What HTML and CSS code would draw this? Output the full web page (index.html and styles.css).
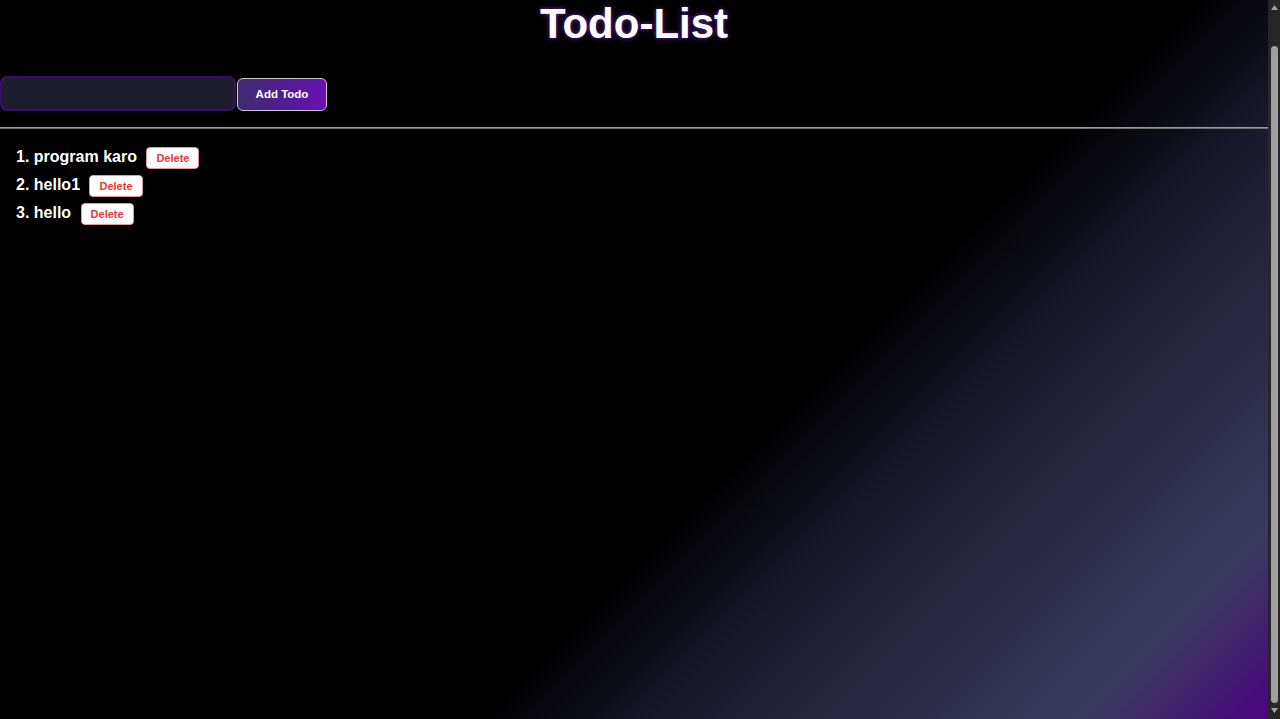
FILE: index.html
```html
<!DOCTYPE html>
<html lang="en">
<head>
<meta charset="utf-8">
<title>Todo-List</title>
<link rel="stylesheet" href="styles.css">
</head>
<body>
  <main class="page">
    <h1 class="title">Todo-List</h1>
    <div class="add-row">
      <input class="todo-input" type="text" aria-label="New todo">
      <button class="add-btn" type="button">Add Todo</button>
    </div>
    <hr class="divider">
    <ul class="todo-list">
      <li class="todo-item"><span class="todo-text">1. program karo</span> <button class="del-btn" type="button">Delete</button></li>
      <li class="todo-item"><span class="todo-text">2. hello1</span> <button class="del-btn" type="button">Delete</button></li>
      <li class="todo-item"><span class="todo-text">3. hello</span> <button class="del-btn" type="button">Delete</button></li>
    </ul>
  </main>
  <div class="scrollbar" aria-hidden="true">
    <div class="sb-arrow sb-up">
      <svg width="7" height="5" viewBox="0 0 7 5"><polygon points="3.5,0 7,5 0,5" fill="#a3a3a3"/></svg>
    </div>
    <div class="sb-thumb"></div>
    <div class="sb-arrow sb-down">
      <svg width="7" height="5" viewBox="0 0 7 5"><polygon points="0,0 7,0 3.5,5" fill="#a3a3a3"/></svg>
    </div>
  </div>
</body>
</html>
```

FILE: styles.css
```css
html, body {
  margin: 0;
  height: 100%;
  overflow: hidden;
}

body {
  font-family: "Liberation Sans", Arial, sans-serif;
  color: #ffffff;
  background: linear-gradient(135deg, #000000 60%, #1a1a2e 70%, #3a3a5e 90%, #4b0082 100%);
}

.page {
  margin-right: 12px;
}

.title {
  margin: 0 0 28px 0;
  text-align: center;
  font-size: 42px;
  font-weight: bold;
  color: #ffffff;
  text-shadow: 0 0 5px rgba(138, 43, 226, 0.85);
}

.add-row {
  display: flex;
  align-items: center;
  gap: 1px;
}

.todo-input {
  box-sizing: border-box;
  width: 236px;
  height: 35px;
  margin: 0;
  padding: 0 10px;
  background: #1d1d2d;
  border: 2px solid #3d0b70;
  border-radius: 7px;
  color: #ffffff;
  font-family: inherit;
  font-size: 14px;
  outline: none;
}

.add-btn {
  box-sizing: border-box;
  width: 90px;
  height: 33px;
  margin: 1px 0 0 0;
  padding: 0;
  background: linear-gradient(90deg, #3d2d6e 0%, #531a95 55%, #6a11b4 100%);
  border: 1px solid #c9c9c9;
  border-radius: 6px;
  color: #ffffff;
  font-family: inherit;
  font-size: 11.5px;
  font-weight: bold;
  cursor: pointer;
}

.divider {
  margin: 16px 0 0 0;
  height: 0;
  border: none;
  border-top: 1px solid #9b9b9b;
  border-bottom: 1px solid #6e6e6e;
}

.todo-list {
  list-style: none;
  margin: 18px 0 0 0;
  padding: 0 0 0 16px;
}

.todo-item {
  margin: 0 0 6px 0;
  font-size: 16px;
  font-weight: bold;
  color: #ffffff;
}

.todo-text {
  margin-right: 5px;
}

.del-btn {
  box-sizing: border-box;
  height: 22px;
  margin: 0;
  padding: 0 9px;
  background: #ffffff;
  border: 1px solid #e59a9a;
  border-radius: 4px;
  color: #e53935;
  font-family: inherit;
  font-size: 11px;
  font-weight: bold;
  cursor: pointer;
}

/* decorative browser scrollbar seen in the screenshot */
.scrollbar {
  position: fixed;
  top: 0;
  right: 0;
  bottom: 0;
  width: 12px;
  display: flex;
  flex-direction: column;
  align-items: center;
  background: #262626;
}

.sb-arrow {
  display: flex;
  justify-content: center;
  height: 14px;
  flex: none;
}

.sb-up {
  align-items: flex-start;
  padding-top: 5px;
  box-sizing: border-box;
}

.sb-down {
  align-items: flex-start;
  padding-top: 3px;
  box-sizing: border-box;
}

.sb-arrow svg {
  display: block;
}

.sb-thumb {
  width: 7px;
  flex: 1;
  margin: 32px 0 2px 0;
  background: #9f9f9f;
  border-radius: 4px;
}
```
